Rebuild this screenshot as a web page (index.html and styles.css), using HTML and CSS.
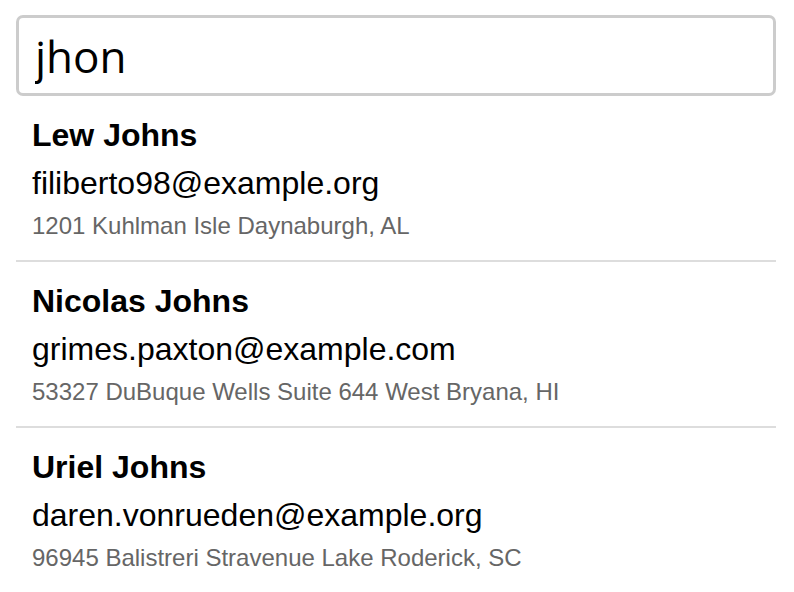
FILE: index.html
```html
<!DOCTYPE html>
<html>
<head>
<meta charset="utf-8">
<link rel="stylesheet" href="styles.css">
</head>
<body>
<div class="search">
  <input class="search-input" type="text" value="jhon">
  <ul class="results">
    <li class="result">
      <div class="name">Lew Johns</div>
      <div class="email">filiberto98@example.org</div>
      <div class="address">1201 Kuhlman Isle Daynaburgh, AL</div>
    </li>
    <li class="result">
      <div class="name">Nicolas Johns</div>
      <div class="email">grimes.paxton@example.com</div>
      <div class="address">53327 DuBuque Wells Suite 644 West Bryana, HI</div>
    </li>
    <li class="result">
      <div class="name">Uriel Johns</div>
      <div class="email">daren.vonrueden@example.org</div>
      <div class="address">96945 Balistreri Stravenue Lake Roderick, SC</div>
    </li>
  </ul>
</div>
</body>
</html>
```

FILE: styles.css
```css
html, body {
  margin: 0;
  padding: 0;
  background: #fff;
}
body {
  font-family: "Liberation Sans", Arial, sans-serif;
  color: #000;
}
.search {
  width: 760px;
  margin: 15px 16px 0;
}
.search-input {
  display: block;
  box-sizing: border-box;
  width: 100%;
  height: 81px;
  margin: 0;
  padding: 0 16px;
  border: 3px solid #cccccc;
  border-radius: 7px;
  font-family: "Open Sans", sans-serif;
  font-size: 44px;
  color: #000;
  background: #fff;
  outline: none;
}
.results {
  list-style: none;
  margin: 0;
  padding: 0;
}
.result {
  padding: 17px 16px 18px;
  border-bottom: 2px solid #dddddd;
}
.result:last-child {
  border-bottom: none;
}
.name {
  font-size: 32px;
  font-weight: bold;
  line-height: 44px;
}
.email {
  margin-top: 4px;
  font-size: 32px;
  line-height: 44px;
}
.address {
  margin-top: 5px;
  font-size: 24px;
  line-height: 32px;
  color: #666666;
}
```
